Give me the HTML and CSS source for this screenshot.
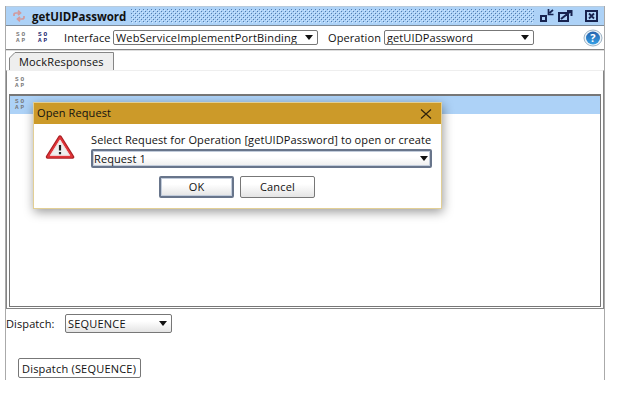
FILE: index.html
```
<!DOCTYPE html>
<html lang="en">
<head>
<meta charset="utf-8">
<title>getUIDPassword</title>
<link rel="stylesheet" href="styles.css">
</head>
<body>
<main class="window">
  <header class="titlebar">
    <svg class="sync" width="14" height="12" viewBox="0 0 14 12" fill="none" stroke="#d29a9c" stroke-width="1.7"><path d="M2 6V4.5Q2 3 4 3H8M6 .7L8.5 3L6 5.2M12 6V7.5Q12 9 10 9H6M8 6.8L5.500 9L8 11.3"/></svg>
    <h1 class="title">getUIDPassword</h1>
    <svg class="grip" width="403" height="14"><defs><pattern id="dots" width="4" height="4" patternUnits="userSpaceOnUse"><path d="M0 0h1v1H0zM2 2h1v1H2z" fill="#527cad"/><path d="M1 1h1v1H1zM3 3h1v1H3z" fill="#d1e8ff"/></pattern></defs><rect width="403" height="14" fill="url(#dots)"/></svg>
    <svg class="controls" width="60" height="14" viewBox="0 0 60 14" fill="none" stroke="#17234f" stroke-width="2"><path d="M1 7h5v5H1zM19 4h9v8h-9zM21 10L31 2M27 2h4.500v5"/><path d="M13 1L9.500 4M8.500 0v5.500h5" stroke-width="1.700"/><path d="M46 2h11v10H46z"/><path d="M49 4.500l5 5M54 4.500l-5 5" stroke-width="1.800"/></svg>
  </header>
  <div class="toolbar">
    <span class="soap"><b>SO</b><b>AP</b></span>
    <span class="soap navy"><b>SO</b><b>AP</b></span>
    <span class="label interface">Interface</span>
    <div class="combo binding"><span>WebServiceImplementPortBinding</span><i class="arrow"></i></div>
    <span class="label operation">Operation</span>
    <div class="combo method"><span>getUIDPassword</span><i class="arrow"></i></div>
    <svg class="help" width="20" height="18" viewBox="0 0 20 18"><defs><linearGradient id="blue" x2="0" y2="1"><stop stop-color="#2361ad"/><stop offset="1" stop-color="#36a0e5"/></linearGradient></defs><ellipse cx="10" cy="9" rx="9" ry="8" fill="#edf3f8" stroke="#9fb4c5"/><ellipse cx="10" cy="9" rx="7" ry="6.500" fill="url(#blue)"/><text x="10" y="13" text-anchor="middle" class="question">?</text></svg>
  </div>
  <div class="tabs">
    <svg class="tabshape" width="105" height="18" viewBox="0 0 105 18"><path d="M.5 18V6L6 .5H104.500V18" fill="#eee" stroke="#858585"/></svg>
    <span class="tabtext">MockResponses</span>
  </div>
  <section class="panel">
    <div class="tools"><span class="soap"><b>SO</b><b>AP</b></span></div>
    <div class="list"><div class="row"><span class="soap"><b>SO</b><b>AP</b></span></div></div>
  </section>
  <div class="dispatch"><span class="dlabel">Dispatch:</span><div class="combo sequence"><span>SEQUENCE</span><i class="arrow"></i></div></div>
  <div class="bottomtab">Dispatch (SEQUENCE)</div>
</main>
<section class="dialog">
  <header class="dialoghead"><span>Open Request</span><svg width="12" height="10" viewBox="0 0 12 10" stroke="#30220c" stroke-width="1.200"><path d="M1 .5l10 9M11 .5l-10 9"/></svg></header>
  <div class="content">
    <svg class="warning" width="30" height="24" viewBox="0 0 30 24"><path d="M15 2L27.500 22H2.500Z" fill="#eee" stroke="#a92024" stroke-width="3.500" stroke-linejoin="round"/><path d="M15 2.500L27 21.700H3Z" fill="#eaecec" stroke="#df3438" stroke-width="2" stroke-linejoin="round"/><path d="M15 5L24.500 20.300H5.500Z" fill="#eef0ef" stroke="#f5d0d0" stroke-width=".7"/><path d="M15 10v5.500M15 17v2.200" stroke="#222" stroke-width="2.200"/></svg>
    <div class="fields">
      <div class="prompt">Select Request for Operation [getUIDPassword] to open or create</div>
      <div class="combo request"><span>Request 1</span><i class="arrow"></i></div>
    </div>
  </div>
  <div class="buttons"><button class="ok">OK</button><button>Cancel</button></div>
</section>
</body>
</html>
```

FILE: styles.css
```
* { box-sizing: border-box; }
body { margin: 0; width: 622px; height: 402px; overflow: hidden; background: #fff; color: #111; font: 11px/16px "Open Sans", "Noto Sans", sans-serif; letter-spacing: .1px; white-space: nowrap; }
svg { display: block; flex: none; }
.window { width: 600px; height: 374px; margin: 6px 0 0 5px; border-left: 1px solid #aaa; border-right: 1px solid #aaa; }
.titlebar { height: 20px; display: flex; align-items: center; background: #add2f7; border-top: 1px solid #b9cbdc; border-bottom: 1px solid #7d8b99; }
.sync { margin-left: 6px; }
.title { width: 93px; margin: 2px 6px 0 6px; font-size: 11.5px; line-height: 18px; font-weight: 700; letter-spacing: 0; }
.controls { margin-left: 6px; }
.toolbar { height: 24px; display: flex; align-items: center; border-bottom: 1px solid #858585; box-shadow: 0 1px #ddd; }
.soap { width: 11px; height: 12px; flex: none; display: block; font: 700 6px/6px "Liberation Mono", monospace; letter-spacing: 2px; color: #777; }
.soap b { display: block; height: 6px; line-height: 6px; }
.toolbar .soap { margin-left: 10px; }
.toolbar .navy { margin-left: 11px; color: #14196b; }
.label.interface { width: 49px; margin-left: 15px; }
.label.operation { width: 56px; margin-left: 10px; }
.combo { display: flex; align-items: center; justify-content: space-between; border: 1px solid #777; border-radius: 2px; padding: 0 4px 0 2px; background: #fff; overflow: hidden; }
.arrow { border: 4px solid transparent; border-top: 5px solid #111; border-bottom: 0; flex: none; }
.binding { width: 205px; height: 15px; letter-spacing: .17px; }
.method { width: 150px; height: 15px; }
.help { margin-left: auto; margin-right: 1px; }
.question { font: bold 11px "Open Sans", sans-serif; fill: #fff; }
.tabs { height: 20px; padding: 2px 0 0 3px; display: grid; }
.tabshape, .tabtext { grid-area: 1 / 1; }
.tabtext { padding-left: 10px; line-height: 19px; letter-spacing: .17px; }
.panel { width: 598px; height: 239px; border-left: 1px solid #858585; border-right: 1px solid #858585; border-bottom: 1px solid #858585; border-top: 1px solid #eee; padding: 0 2px; }
.tools { height: 23px; padding: 6px 0 0 6px; }
.list { height: 213px; border: 1px solid #777; border-top-width: 2px; }
.row { height: 18px; padding: 3px 0 0 5px; background: #add2f7; }
.dispatch { height: 34px; padding-top: 5px; display: flex; }
.dlabel { width: 59px; line-height: 19px; letter-spacing: .1px; }
.sequence { width: 107px; height: 19px; background: linear-gradient(#fff 35%, #e4e4e4); letter-spacing: .2px; }
.bottomtab { width: 123px; height: 20px; margin: 15px 0 0 12px; border: 1px solid #777; border-radius: 2px; padding-left: 3px; line-height: 19px; letter-spacing: .2px; }
.dialog { position: absolute; left: 33px; top: 102px; width: 409px; height: 107px; background: #fff; border: 1px solid #e2cf95; box-shadow: 1px 3px 10px #0006; }
.dialoghead { height: 21px; display: flex; align-items: center; justify-content: space-between; padding: 0 9px 0 3px; background: #cc9a29; }
.dialoghead span { line-height: 16px; margin-top: -2px; }
.content { height: 45px; display: flex; }
.warning { margin: 11px 0 0 11px; }
.fields { margin: 8px 0 0 16px; width: 341px; }
.prompt { height: 17px; line-height: 16px; }
.request { width: 341px; height: 19px; border: 2px solid #68758b; box-shadow: inset 0 0 0 1px #c2ccdb; background: linear-gradient(#fff 40%, #eee); padding: 0 2px 0 1px; }
.buttons { height: 32px; display: flex; gap: 6px; padding: 7px 0 0 125px; }
button { width: 75px; height: 22px; padding: 0; border: 1px solid #777; border-radius: 2px; font: inherit; letter-spacing: .2px; color: #111; background: linear-gradient(#fff 35%, #e4e4e4); }
.ok { border: 2px solid #68758b; box-shadow: inset 0 0 0 1px #c2ccdb; }
```
